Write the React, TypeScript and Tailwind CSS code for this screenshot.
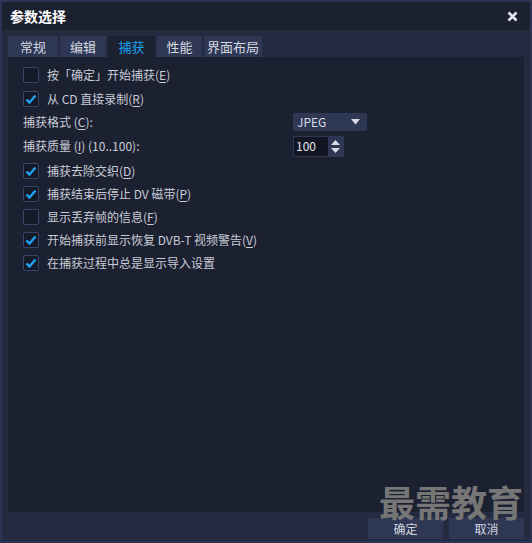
import React from "react";

const font = { fontFamily: '"Noto Sans CJK SC", "Noto Sans", sans-serif' };

const Key: React.FC<{ k: string }> = ({ k }) => (
  <span>
    (<span className="underline underline-offset-2">{k}</span>)
  </span>
);

const Check: React.FC<{ on?: boolean }> = ({ on }) => (
  <div className="w-4 h-4 shrink-0 border border-[#3a4466] bg-[#151a28] rounded-[2px] flex items-center justify-center">
    {on && (
      <svg width="12" height="12" viewBox="0 0 12 12">
        <path d="M1.5 6.5 L4.5 9.5 L10.5 2.5" stroke="#1ea5f5" strokeWidth="2.4" fill="none" />
      </svg>
    )}
  </div>
);

const CheckRow: React.FC<{ on?: boolean; h: string; children: React.ReactNode }> = ({ on, h, children }) => (
  <div className={`flex items-center gap-2 ${h}`}>
    <Check on={on} />
    <span className="text-[12px] text-[#c9ccd6] leading-none">{children}</span>
  </div>
);

const tabs = ["常规", "编辑", "捕获", "性能", "界面布局"];
const tabWidths = ["w-[50px]", "w-[46px]", "w-[47px]", "w-[45px]", "w-[58px]"];

export default function App() {
  return (
    <div style={font} className="relative w-[532px] h-[543px] border-2 border-[#2b3455] bg-[#242b40] flex flex-col select-none">
      <div className="h-[28px] bg-[#1c2130] flex items-center justify-between pl-2 pr-[12px]">
        <span className="text-white font-bold text-[14px]">参数选择</span>
        <svg width="11" height="11" viewBox="0 0 11 11">
          <path d="M1.5 1.5 L9.5 9.5 M9.5 1.5 L1.5 9.5" stroke="#e6e8ee" strokeWidth="2.6" />
        </svg>
      </div>
      <div className="flex pl-[6px] mt-[6px] gap-[2px]">
        {tabs.map((t, i) => (
          <div
            key={t}
            className={`${tabWidths[i]} h-[21px] flex items-center justify-center text-[13px] ${
              i === 2 ? "bg-[#1c2131] text-[#1ba3f2]" : "bg-[#2e3754] text-[#d5d8e0]"
            }`}
          >
            {t}
          </div>
        ))}
      </div>
      <div className="mx-[6px] flex-1 bg-[#1c2131] pl-[15px] pt-[6px] flex flex-col">
        <CheckRow h="h-[24px]">
          按「确定」开始捕获<Key k="E" />
        </CheckRow>
        <CheckRow on h="h-[24px]">
          从 CD 直接录制<Key k="R" />
        </CheckRow>
        <div className="flex items-center h-[22px]">
          <span className="w-[270px] text-[12px] text-[#c9ccd6]">
            捕获格式 <Key k="C" />:
          </span>
          <div className="w-[74px] h-[18px] bg-[#2e3754] rounded-[2px] flex items-center justify-between pl-[4px] pr-[7px]">
            <span className="text-[12px] text-[#d8dbe3]">JPEG</span>
            <svg width="9" height="6" viewBox="0 0 9 6">
              <path d="M0 0 H9 L4.5 5.5 Z" fill="#d8dbe3" />
            </svg>
          </div>
        </div>
        <div className="flex items-center h-[26px]">
          <span className="w-[270px] text-[12px] text-[#c9ccd6]">
            捕获质量 <Key k="I" /> (10..100):
          </span>
          <div className="w-[51px] h-[21px] flex border border-[#2e3754]">
            <div className="flex-1 bg-[#121623] flex items-center pl-[2px] text-[12px] text-[#e4e6ec]">100</div>
            <div className="w-[15px] bg-[#2e3754] flex flex-col items-center justify-center gap-[3px]">
              <svg width="9" height="5" viewBox="0 0 9 5">
                <path d="M0 5 H9 L4.5 0 Z" fill="#d8dbe3" />
              </svg>
              <svg width="9" height="5" viewBox="0 0 9 5">
                <path d="M0 0 H9 L4.5 5 Z" fill="#d8dbe3" />
              </svg>
            </div>
          </div>
        </div>
        <div className="flex flex-col">
          <CheckRow on h="h-[23px]">
            捕获去除交织<Key k="D" />
          </CheckRow>
          <CheckRow on h="h-[23px]">
            捕获结束后停止 DV 磁带<Key k="P" />
          </CheckRow>
          <CheckRow h="h-[23px]">
            显示丢弃帧的信息<Key k="F" />
          </CheckRow>
          <CheckRow on h="h-[23px]">
            开始捕获前显示恢复 DVB-T 视频警告<Key k="V" />
          </CheckRow>
          <CheckRow on h="h-[23px]">
            在捕获过程中总是显示导入设置
          </CheckRow>
        </div>
      </div>
      <div className="h-[29px] flex justify-end items-start pt-[6px] pr-[6px] gap-[6px]">
        <div className="w-[75px] h-[21px] bg-[#2e3754] flex items-center justify-center text-[12px] text-[#d5d8e0]">
          确定
        </div>
        <div className="w-[75px] h-[21px] bg-[#2e3754] flex items-center justify-center text-[12px] text-[#d5d8e0]">
          取消
        </div>
      </div>
      <div className="absolute right-[7px] top-[482px] h-[34px] flex items-center text-[36px] font-bold leading-[34px] text-[#767676] pointer-events-none">
        最需教育
      </div>
    </div>
  );
}
